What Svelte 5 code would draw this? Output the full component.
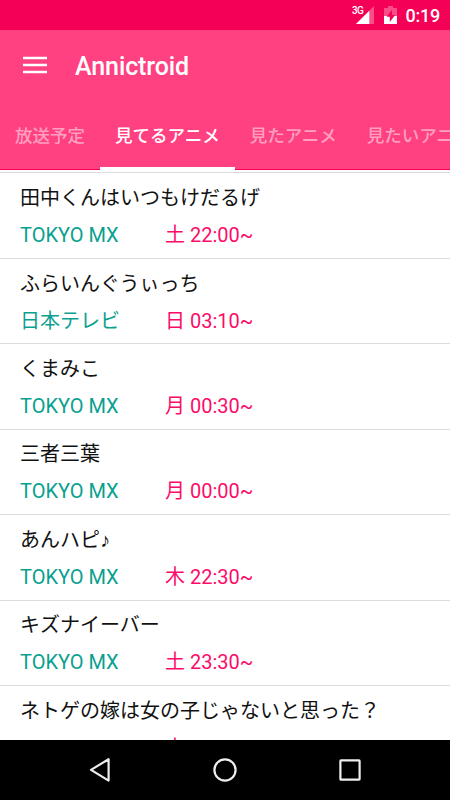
<script lang="ts">
  type Work = { title: string; note?: string; channel: string; day: string; time: string };

  const tabs = ['放送予定', '見てるアニメ', '見たアニメ', '見たいアニメ'];
  let selected = $state(1);

  const works: Work[] = [
    { title: '田中くんはいつもけだるげ', channel: 'TOKYO MX', day: '土', time: '22:00~' },
    { title: 'ふらいんぐうぃっち', channel: '日本テレビ', day: '日', time: '03:10~' },
    { title: 'くまみこ', channel: 'TOKYO MX', day: '月', time: '00:30~' },
    { title: '三者三葉', channel: 'TOKYO MX', day: '月', time: '00:00~' },
    { title: 'あんハピ', note: '♪', channel: 'TOKYO MX', day: '木', time: '22:30~' },
    { title: 'キズナイーバー', channel: 'TOKYO MX', day: '土', time: '23:30~' },
    { title: 'ネトゲの嫁は女の子じゃないと思った？', channel: 'TOKYO MX', day: '土', time: '22:30~' },
  ];
</script>

<div class="screen">
  <div class="status-bar">
    <span class="network">3G</span>
    <svg class="signal" width="18" height="18" viewBox="0 0 18 18">
      <path d="M18 0v18H0z" fill="#fff" fill-opacity="0.3" />
      <path d="M13.3 4.7V18H0z" fill="#fff" />
    </svg>
    <svg class="battery" width="13" height="18" viewBox="0 0 13 18">
      <path d="M4 0h5v2h4v16H0V2h4z" fill="#fff" fill-opacity="0.3" />
      <path d="M0 10h13v8H0z" fill="#fff" />
      <path d="M8 3.8 2.6 10.8h3.2V16l5.4-7H8z" fill="#f50057" />
    </svg>
    <span class="clock">0:19</span>
  </div>

  <header>
    <div class="toolbar">
      <button class="menu" aria-label="Menu">
        <svg width="24" height="18" viewBox="0 0 24 18">
          <path d="M0 1.9h24M0 8.9h24M0 15.9h24" stroke="#fff" stroke-width="2.5" />
        </svg>
      </button>
      <h1>Annictroid</h1>
    </div>
    <nav>
      {#each tabs as tab, i}
        <button class="tab" class:selected={selected === i} onclick={() => (selected = i)}>{tab}</button>
      {/each}
    </nav>
  </header>

  <main>
    {#each works as work}
      <article>
        <div class="title">{work.title}{#if work.note}<span class="note">{work.note}</span>{/if}</div>
        <div class="broadcast">
          <span class="channel">{work.channel}</span>
          <span class="time">{work.day} {work.time}</span>
        </div>
      </article>
    {/each}
  </main>

  <footer>
    <svg width="24" height="26" viewBox="0 0 24 26">
      <path d="M20.6 2.2v21.4L3 12.9z" />
    </svg>
    <svg width="24" height="26" viewBox="0 0 24 26">
      <circle cx="12" cy="13" r="10.6" />
    </svg>
    <svg width="24" height="26" viewBox="0 0 24 26">
      <rect x="2.4" y="3.4" width="19.2" height="19.2" rx="0.6" />
    </svg>
  </footer>
</div>

<style>
  :global(body) {
    margin: 0;
  }

  .screen {
    display: flex;
    flex-direction: column;
    width: 450px;
    height: 800px;
    overflow: hidden;
    background: #fff;
    font-family: Roboto, 'Noto Sans CJK JP', sans-serif;
  }

  button {
    padding: 0;
    border: 0;
    background: none;
    color: inherit;
    font-family: inherit;
  }

  .status-bar {
    display: flex;
    flex: none;
    box-sizing: border-box;
    height: 30px;
    padding: 6px 10px 0 352px;
    background: #f50057;
    color: #fff;
  }

  .network {
    width: 4px;
    font: 500 10px/9px Roboto, sans-serif;
    letter-spacing: -0.6px;
    white-space: nowrap;
  }

  .signal {
    flex: none;
  }

  .battery {
    flex: none;
    margin-left: 10px;
  }

  .clock {
    margin-left: 8.5px;
    font-size: 18px;
    font-weight: 500;
    line-height: 20px;
    letter-spacing: -0.2px;
  }

  header {
    flex: none;
    box-sizing: border-box;
    height: 140px;
    background: #ff4081;
    color: #fff;
  }

  .toolbar {
    display: flex;
    align-items: center;
    height: 70px;
    padding-left: 23px;
  }

  .menu {
    display: flex;
  }

  h1 {
    margin: 3px 0 0 28px;
    font-size: 25px;
    font-weight: 500;
    line-height: 30px;
    letter-spacing: -0.1px;
  }

  nav {
    display: flex;
    height: 70px;
    overflow: hidden;
    box-shadow: inset 0 -1px #f50057;
  }

  .tab {
    flex: none;
    box-sizing: border-box;
    height: 70px;
    padding: 1px 15px 0;
    border-bottom: 3px solid transparent;
    font-size: 17.5px;
    font-weight: 500;
    color: rgba(255, 255, 255, 0.5);
  }

  .tab.selected {
    border-bottom-color: #fff;
    color: #fff;
  }

  main {
    flex: 1;
    min-height: 0;
    padding-top: 2.4px;
    overflow: hidden;
  }

  article {
    box-sizing: border-box;
    height: 85.43px;
    padding: 9.7px 20px 0;
    border-top: 1px solid #dcdcdc;
    font-size: 20px;
  }

  .title {
    height: 30px;
    line-height: 30px;
    color: #111;
    white-space: nowrap;
  }

  .note {
    font-family: 'Liberation Sans', sans-serif;
  }

  .broadcast {
    display: flex;
    margin-top: 7px;
    line-height: 30px;
  }

  .channel {
    width: 145px;
    color: #0a9f90;
  }

  .time {
    color: #fc0c69;
  }

  footer {
    display: flex;
    flex: none;
    align-items: center;
    justify-content: center;
    gap: 101px;
    height: 60px;
    background: #000;
  }

  footer svg {
    fill: none;
    stroke: #eee;
    stroke-width: 2.2;
    stroke-linejoin: round;
  }
</style>
